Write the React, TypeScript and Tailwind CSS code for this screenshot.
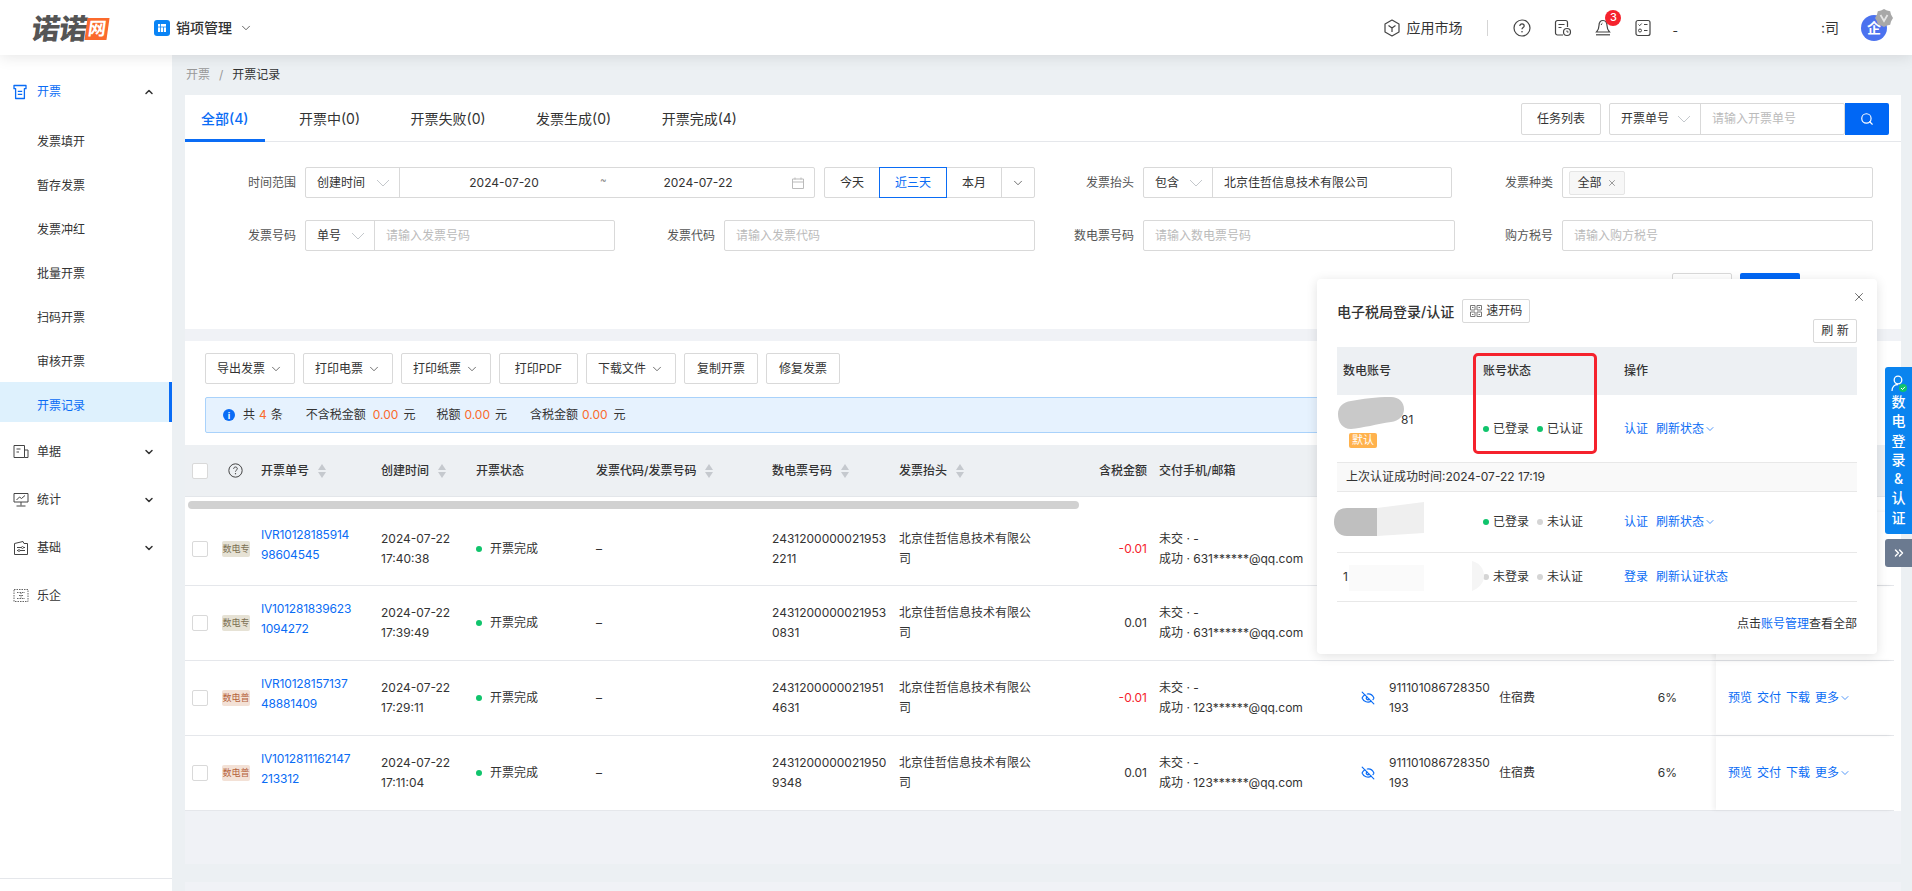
import { ChevronDown, ChevronUp, ChevronsRight, EyeOff, Search, X } from "lucide-react";
import type { ReactNode } from "react";

const SUB_MENU = ["发票填开", "暂存发票", "发票冲红", "批量开票", "扫码开票", "审核开票", "开票记录"];

const TABS = ["全部(4)", "开票中(0)", "开票失败(0)", "发票生成(0)", "开票完成(4)"];

const TOOLBAR = [
	{ label: "导出发票", w: "w-[90px]", menu: true },
	{ label: "打印电票", w: "w-[90px]", menu: true },
	{ label: "打印纸票", w: "w-[90px]", menu: true },
	{ label: "打印PDF", w: "w-[79px]", menu: false },
	{ label: "下载文件", w: "w-[90px]", menu: true },
	{ label: "复制开票", w: "w-[74px]", menu: false },
	{ label: "修复发票", w: "w-[74px]", menu: false },
];

type Invoice = {
	no: string;
	kind: string;
	created: string;
	number: string;
	amount: string;
	email: string;
	// 被弹窗挡住的行,右侧列不渲染
	covered?: boolean;
};

const INVOICES: Invoice[] = [
	{ no: "IVR10128185914\n98604545", kind: "数电专", created: "2024-07-22\n17:40:38", number: "2431200000021953\n2211", amount: "-0.01", email: "631******@qq.com", covered: true },
	{ no: "IV101281839623\n1094272", kind: "数电专", created: "2024-07-22\n17:39:49", number: "2431200000021953\n0831", amount: "0.01", email: "631******@qq.com", covered: true },
	{ no: "IVR10128157137\n48881409", kind: "数电普", created: "2024-07-22\n17:29:11", number: "2431200000021951\n4631", amount: "-0.01", email: "123******@qq.com" },
	{ no: "IV1012811162147\n213312", kind: "数电普", created: "2024-07-22\n17:11:04", number: "2431200000021950\n9348", amount: "0.01", email: "123******@qq.com" },
];

const TABLE_COLS =
	"grid grid-cols-[37px_39px_120px_95px_120px_176px_127px_151px_97px_12px_202px_28px_110px_110px_68px_39px_177px]";

const Caret = () => (
	<svg width="14" height="8" viewBox="0 0 14 8" fill="none" className="shrink-0" aria-hidden="true">
		<path d="M1 1l6 6 6-6" stroke="#c4c8cc" strokeWidth="1" />
	</svg>
);

const SortIcon = () => (
	<svg width="8" height="14" viewBox="0 0 8 14" className="ml-[9px] shrink-0" aria-hidden="true">
		<path d="M4 0l4 6H0z" fill="#c5c9ce" />
		<path d="M4 14L0 8h8z" fill="#c5c9ce" />
	</svg>
);

const QuestionIcon = ({ size }: { size: number }) => (
	<svg width={size} height={size} viewBox="0 0 18 18" fill="none" aria-hidden="true">
		<circle cx="9" cy="9" r="8" stroke="#444" strokeWidth="1.2" />
		<path d="M6.8 7c0-1.3 1-2.2 2.2-2.2s2.2.9 2.2 2.1c0 1.6-2.2 1.7-2.2 3.4" stroke="#444" strokeWidth="1.2" />
		<circle cx="9" cy="12.8" r=".8" fill="#444" />
	</svg>
);

const Cell = ({ className, children }: { className: string; children: ReactNode }) => (
	<div className={`flex h-[31px] items-center rounded-[2px] border border-[#d9d9d9] bg-white ${className}`}>
		{children}
	</div>
);

const Field = ({ label, span, children }: { label: string; span?: boolean; children: ReactNode }) => (
	<div className={`flex items-center ${span ? "col-span-2" : ""}`}>
		<div className="w-[80px] shrink-0 text-right text-[#555]">{label}</div>
		<div className="ml-[9px]">{children}</div>
	</div>
);

const SelectBox = ({ text, w }: { text: string; w: string }) => (
	<div className={`flex h-full shrink-0 items-center justify-between border-r border-[#d9d9d9] pl-[11px] pr-[9px] text-[#333] ${w}`}>
		<span>{text}</span>
		<Caret />
	</div>
);

const NavRow = ({ label, arrow, children }: { label: string; arrow?: boolean; children: ReactNode }) => (
	<div className="flex h-[48px] items-center pl-[13px] pr-[17px]">
		<svg width="16" height="16" viewBox="0 0 16 16" fill="none" className="shrink-0" aria-hidden="true">
			{children}
		</svg>
		<span className="ml-[8px] flex-1">{label}</span>
		{arrow && <ChevronDown size={12} strokeWidth={3} color="#333" />}
	</div>
);

const Sidebar = () => (
	<aside className="flex w-[172px] shrink-0 flex-col justify-between bg-white text-[#333]">
		<div>
			<div className="mt-[15px] flex h-[44px] items-center pl-[13px] pr-[17px] text-[#0a6cf5]">
				<svg width="14" height="16" viewBox="0 0 14 16" fill="none" aria-hidden="true">
					<path d="M1 1.5h12v3.2h-1.6V14.5H2.6V4.7H1z" stroke="#0a6cf5" strokeWidth="1.3" strokeLinejoin="round" />
					<path d="M4.8 7.3h4.4M4.8 10.3h4.4" stroke="#0a6cf5" strokeWidth="1.2" />
				</svg>
				<span className="ml-[10px] flex-1">开票</span>
				<ChevronUp size={12} strokeWidth={3} color="#333" />
			</div>
			<div className="mt-[1px]">
				{SUB_MENU.map((item) => {
					const active = item === "开票记录";
					return (
						<div
							key={item}
							className={`mt-[4px] flex h-[40px] items-center pl-[37px] pt-[7px] ${
								active ? "border-r-[3px] border-[#0a6cf5] bg-[#def1fd] text-[#0a6cf5]" : ""
							}`}
						>
							{item}
						</div>
					);
				})}
			</div>
			<div className="mt-[6px]">
				<NavRow label="单据" arrow>
					<path d="M1 1.5h10.5v12H1zM11.5 6H15v7.5h-3.5M3.5 5h4M3.5 8h2.5" stroke="#444" strokeWidth="1" />
				</NavRow>
				<NavRow label="统计" arrow>
					<path d="M1 1.5h14v8.5H1zM8 10v3.5M3.5 14h9M3.5 8l3-3 2 1.500L12 3.500" stroke="#444" strokeWidth="1" />
				</NavRow>
				<NavRow label="基础" arrow>
					<path d="M1.500 3.500L10 1.500l1 2h3.500v11h-13zM4 7.500h8M4 10.500h8" stroke="#444" strokeWidth="1" />
					<circle cx="9.500" cy="7.500" r="1" fill="#fff" stroke="#444" strokeWidth=".8" />
					<circle cx="6" cy="10.500" r="1" fill="#fff" stroke="#444" strokeWidth=".8" />
				</NavRow>
				<NavRow label="乐企">
					<path d="M1 1.500h14v12H1z" stroke="#666" strokeWidth="1" strokeDasharray="1.5 1" />
					<path d="M4 4.500h8M6 7.500h4M4 10.500h8M8 4.500v6" stroke="#666" strokeWidth="1" strokeDasharray="1.5 1" />
				</NavRow>
			</div>
		</div>
		<div className="h-[13px] border-t border-[#e5e7eb]" />
	</aside>
);

const Header = () => (
	<header className="relative z-10 flex h-[55px] shrink-0 items-center bg-white text-[14px] text-[#333] shadow-[0_2px_14px_rgba(0,0,0,0.1)]">
		<div className="ml-[32px] mt-[2px] flex w-[122px] items-center">
			<span className="skew-x-[-8deg] text-[28px] font-black leading-none tracking-[-0.5px] text-[#555]">诺诺</span>
			<span className="ml-[-1px] flex h-[22px] w-[22px] skew-x-[-8deg] items-center justify-center bg-[#fb6a2c] text-[18px] font-bold leading-none text-white">
				网
			</span>
		</div>
		<svg width="16" height="16" viewBox="0 0 16 16" aria-hidden="true">
			<rect width="16" height="16" rx="3" fill="#0a84f5" />
			<rect x="4" y="4" width="8" height="8" fill="#fff" />
			<path d="M6.500 4v8M4 7h8M9.500 7v5" stroke="#0a84f5" strokeWidth=".8" />
		</svg>
		<span className="ml-[6px] font-medium">销项管理</span>
		<ChevronDown size={14} strokeWidth={1.3} className="ml-[7px]" />
		<div className="flex-1" />
		<svg width="16" height="18" viewBox="0 0 16 18" fill="none" aria-hidden="true">
			<path d="M8 1l7 4v8l-7 4-7-4V5z" stroke="#444" strokeWidth="1.2" strokeLinejoin="round" />
			<path d="M4.500 6.500L8 9l3.500-2.500M8 9v4" stroke="#444" strokeWidth="1.2" />
		</svg>
		<span className="ml-[6px]">应用市场</span>
		<div className="ml-[25px] h-[16px] w-px bg-[#d5d5d5]" />
		<div className="ml-[25px]">
			<QuestionIcon size={18} />
		</div>
		<svg width="18" height="18" viewBox="0 0 18 18" fill="none" className="ml-[23px]" aria-hidden="true">
			<path d="M9 16H3.500A2 2 0 0 1 1.500 14V3.500a2 2 0 0 1 2-2h8a2 2 0 0 1 2 2V8" stroke="#444" strokeWidth="1.2" />
			<path d="M4.500 5.500h6M4.500 8.500h3" stroke="#444" strokeWidth="1.2" />
			<circle cx="13" cy="13" r="3.500" stroke="#444" strokeWidth="1.2" />
			<path d="M13 11.500V13h1.500" stroke="#444" strokeWidth="1" />
		</svg>
		<div className="relative ml-[23px]">
			<svg width="16" height="18" viewBox="0 0 16 18" fill="none" aria-hidden="true">
				<path d="M8 1.500c-2.800 0-4 2.400-4 5 0 3-1.200 5-2.500 6.500h13C13.200 11.500 12 9.500 12 6.500c0-2.600-1.200-5-4-5z" stroke="#444" strokeWidth="1.2" />
				<path d="M1 15.800h14" stroke="#444" strokeWidth="1.2" />
				<path d="M6.200 6c.2-1 .6-1.500 1.200-1.800" stroke="#444" strokeWidth="1" />
			</svg>
			<span className="absolute left-[10px] top-[-9px] flex h-[16px] w-[16px] items-center justify-center rounded-full bg-[#f5222d] text-[11px] font-medium text-white">
				3
			</span>
		</div>
		<svg width="16" height="18" viewBox="0 0 16 18" fill="none" className="ml-[24px]" aria-hidden="true">
			<rect x="1" y="1.500" width="14" height="15" rx="2" stroke="#444" strokeWidth="1.2" />
			<path d="M3.500 5.500l1.200 1.200 2-2.200M9 5.500h3.500M9 11.500h3.500" stroke="#444" strokeWidth="1" />
			<circle cx="5" cy="11.500" r="1.500" stroke="#444" strokeWidth="1" />
		</svg>
		<span className="ml-[21px] mt-[6px] text-[12px] leading-none">-</span>
		<span className="ml-[143px] w-[17px] whitespace-nowrap text-right">:司</span>
		<div className="relative ml-[23px] mr-[25px] flex h-[26px] w-[26px] items-center justify-center rounded-full bg-[#4b72ef] text-[14px] font-bold leading-none text-white">
			企
			<svg width="18" height="18" viewBox="0 0 18 18" className="absolute left-[14px] top-[-6px]" aria-hidden="true">
				<path d="M9 0l3 1.500 3.200.8.800 3.200L18 9l-2 3.500-.8 3.200-3.200.8L9 18l-3-1.500-3.200-.8L2 12.500 0 9l2-3.500.8-3.200L6 1.500z" fill="#a8a8a8" />
				<path d="M5.500 6L9 12l3.500-6" stroke="#e5e5e5" strokeWidth="1.800" fill="none" />
			</svg>
		</div>
	</header>
);

const FilterCard = () => (
	<section className="bg-white">
		<div className="flex h-[47px] justify-between border-b border-[#e5e7eb] pr-[12px]">
			<div className="flex gap-[18.5px] text-[14px]">
				{TABS.map((tab, i) => (
					<div
						key={tab}
						className={`flex h-[47px] items-center border-b-[3px] px-4 pt-[3px] ${
							i === 0 ? "border-[#0a6cf5] font-medium text-[#0a6cf5]" : "border-transparent text-[#333]"
						}`}
					>
						{tab}
					</div>
				))}
			</div>
			<div className="flex items-start pt-[8px]">
				<button className="h-[32px] w-[80px] rounded-[2px] border border-[#d9d9d9] text-[#333]">任务列表</button>
				<Cell className="ml-[8px] h-[32px] w-[236px]">
					<SelectBox text="开票单号" w="w-[91px]" />
					<span className="ml-[11px] text-[#bbb]">请输入开票单号</span>
				</Cell>
				<button className="flex h-[32px] w-[44px] items-center justify-center rounded-r-[2px] bg-[#0067f5]">
					<Search size={14} color="#fff" />
				</button>
			</div>
		</div>
		<div className="grid grid-cols-[repeat(4,419px)] gap-y-[22px] pl-[31px] pt-[25px]">
			<Field label="时间范围" span>
				<div className="flex items-center">
					<Cell className="w-[510px]">
						<SelectBox text="创建时间" w="w-[94px]" />
						<div className="flex flex-1 items-center text-[#333]">
							<span className="w-[208px] text-center">2024-07-20</span>
							<span className="-ml-[8px] -mt-[6px] w-[8px] text-[10px] text-[#888]">~</span>
							<span className="w-[180px] text-center">2024-07-22</span>
							<svg width="12" height="12" viewBox="0 0 12 12" fill="none" className="ml-auto mr-[10px]" aria-hidden="true">
								<path d="M.5 2h11v9.500H.5zM.5 5h11M3 .5v2M9 .5v2" stroke="#bbb" />
							</svg>
						</div>
					</Cell>
					<Cell className="ml-[9px] w-[211px]">
						<div className="w-[54px] text-center text-[#333]">今天</div>
						<div className="flex h-[31px] w-[68px] items-center justify-center border border-[#0a6cf5] text-[#0a6cf5]">近三天</div>
						<div className="w-[54px] text-center text-[#333]">本月</div>
						<div className="flex h-full flex-1 items-center justify-center border-l border-[#d9d9d9]">
							<ChevronDown size={14} strokeWidth={1.2} color="#333" />
						</div>
					</Cell>
				</div>
			</Field>
			<Field label="发票抬头">
				<Cell className="w-[309px]">
					<SelectBox text="包含" w="w-[69px]" />
					<span className="ml-[11px] text-[#333]">北京佳哲信息技术有限公司</span>
				</Cell>
			</Field>
			<Field label="发票种类">
				<Cell className="w-[311px]">
					<div className="ml-[6px] flex h-[24px] w-[56px] items-center justify-center gap-[5px] rounded-[2px] border border-[#e5e5e5] bg-[#f7f7f7] text-[#333]">
						全部
						<X size={10} color="#888" />
					</div>
				</Cell>
			</Field>
			<Field label="发票号码">
				<Cell className="w-[310px]">
					<SelectBox text="单号" w="w-[69px]" />
					<span className="ml-[11px] text-[#bbb]">请输入发票号码</span>
				</Cell>
			</Field>
			<Field label="发票代码">
				<Cell className="w-[311px] pl-[11px] text-[#bbb]">请输入发票代码</Cell>
			</Field>
			<Field label="数电票号码">
				<Cell className="w-[312px] pl-[11px] text-[#bbb]">请输入数电票号码</Cell>
			</Field>
			<Field label="购方税号">
				<Cell className="w-[311px] pl-[11px] text-[#bbb]">请输入购方税号</Cell>
			</Field>
		</div>
		<div className="mr-[101px] mt-[22px] flex justify-end gap-[8px] pb-[24px]">
			<button className="h-[32px] w-[60px] rounded-[2px] border border-[#d9d9d9] text-[#333]">重置</button>
			<button className="h-[32px] w-[60px] rounded-[2px] bg-[#0067f5] text-white">查询</button>
		</div>
	</section>
);

const Multi = ({ text, className = "" }: { text: string; className?: string }) => (
	<div className={`whitespace-pre-line leading-[20px] ${className}`}>{text}</div>
);

const TableRow = ({ row }: { row: Invoice }) => (
	<div className={`${TABLE_COLS} mr-[7px] h-[75px] items-center border-b border-[#e5e7eb] text-[#333] first:h-[74px]`}>
		<div className="flex justify-start pl-[7px]">
			<div className="h-[16px] w-[16px] rounded-[2px] border border-[#d9d9d9] bg-white" />
		</div>
		<div
			className={`flex h-[16px] w-[28px] items-center justify-center rounded-[2px] text-[9px] ${
				row.kind === "数电专" ? "bg-[#e6e2d5] text-[#7b6f52]" : "bg-[#f3e1d6] text-[#b5623c]"
			}`}
		>
			{row.kind}
		</div>
		<Multi text={row.no} className="-mt-[8px] tracking-[-0.2px] text-[#0a6cf5]" />
		<Multi text={row.created} />
		<div className="flex items-center">
			<span className="h-[6px] w-[6px] rounded-full bg-[#10c46c]" />
			<span className="ml-[8px]">开票完成</span>
		</div>
		<div>–</div>
		<Multi text={row.number} />
		<Multi text={"北京佳哲信息技术有限公\n司"} />
		<div className={`text-right ${row.amount.startsWith("-") ? "text-[#f5222d]" : ""}`}>{row.amount}</div>
		<div />
		<Multi text={`未交 · -\n成功 · ${row.email}`} />
		{row.covered ? (
			<div className="col-span-5" />
		) : (
			<>
				<EyeOff size={14} color="#0a6cf5" />
				<Multi text={"911101086728350\n193"} />
				<div>住宿费</div>
				<div className="text-right">6%</div>
				<div />
			</>
		)}
		<div className="flex h-full items-center gap-[5px] pl-[12px] text-[#0a6cf5] shadow-[-3px_0_4px_rgba(0,0,0,0.05)]">
			{!row.covered && (
				<>
					<span className="shrink-0">预览</span>
					<span className="shrink-0">交付</span>
					<span className="shrink-0">下载</span>
					<span className="flex shrink-0 items-center">
						更多
						<ChevronDown size={12} strokeWidth={1.4} />
					</span>
				</>
			)}
		</div>
	</div>
);

const RecordCard = () => (
	<section className="mt-[12px] bg-white pt-[12px]">
		<div className="flex gap-[8px] pl-[20px]">
			{TOOLBAR.map((b) => (
				<button
					key={b.label}
					className={`flex h-[31px] items-center justify-center gap-[4px] rounded-[2px] border border-[#d9d9d9] text-[#333] ${b.w}`}
				>
					{b.label}
					{b.menu && <ChevronDown size={14} strokeWidth={1.2} />}
				</button>
			))}
		</div>
		<div className="ml-[20px] mr-[30px] mt-[13px] flex h-[36px] items-center rounded-[2px] border border-[#a9d2fb] bg-[#e6f2fe] pl-[17px] text-[#333]">
			<span className="flex h-[12px] w-[12px] items-center justify-center rounded-full bg-[#0a6cf5] text-[9px] font-bold leading-none text-white">
				i
			</span>
			<span className="ml-[8px]">共</span>
			<span className="ml-[4px] text-[#fa6a2c]">4</span>
			<span className="ml-[4px]">条</span>
			<span className="ml-[23px]">不含税金额</span>
			<span className="ml-[7px] text-[#fa6a2c]">0.00</span>
			<span className="ml-[5px]">元</span>
			<span className="ml-[21px]">税额</span>
			<span className="ml-[4px] text-[#fa6a2c]">0.00</span>
			<span className="ml-[5px]">元</span>
			<span className="ml-[23px]">含税金额</span>
			<span className="ml-[4px] text-[#fa6a2c]">0.00</span>
			<span className="ml-[6px]">元</span>
		</div>
		<div className="mt-[12px]">
			<div className={`${TABLE_COLS} h-[52px] items-center border-b border-[#e3e6ea] bg-[#edf0f3] font-medium text-[#333]`}>
				<div className="pl-[7px]">
					<div className="h-[16px] w-[16px] rounded-[2px] border border-[#d9d9d9] bg-white" />
				</div>
				<div className="pl-[6px]">
					<QuestionIcon size={15} />
				</div>
				<div className="flex items-center">开票单号<SortIcon /></div>
				<div className="flex items-center">创建时间<SortIcon /></div>
				<div>开票状态</div>
				<div className="flex items-center">发票代码/发票号码<SortIcon /></div>
				<div className="flex items-center">数电票号码<SortIcon /></div>
				<div className="flex items-center">发票抬头<SortIcon /></div>
				<div className="text-right">含税金额</div>
				<div />
				<div>交付手机/邮箱</div>
			</div>
			<div className="flex h-[15px] items-start pl-[3px] pt-[4px]">
				<div className="h-[8px] w-[891px] rounded-[4px] bg-[#d1d1d1]" />
			</div>
			<div>
				{INVOICES.map((row) => (
					<TableRow key={row.no} row={row} />
				))}
			</div>
		</div>
	</section>
);

const Status = ({ on, label }: { on: boolean; label: string }) => (
	<span className="flex w-[54px] items-center">
		<span className={`h-[6px] w-[6px] rounded-full ${on ? "bg-[#10c46c]" : "bg-[#d5d5d5]"}`} />
		<span className="ml-[4px]">{label}</span>
	</span>
);

const ACCOUNT_COLS = "grid grid-cols-[146px_141px_1fr] items-center";

const AuthPopup = () => (
	<div className="absolute left-[1317px] top-[279px] h-[375px] w-[560px] rounded-[4px] bg-white px-[20px] pt-[20px] text-[#333] shadow-[0_2px_12px_rgba(0,0,0,0.12)]">
		<X size={14} strokeWidth={1.2} className="absolute right-[11px] top-[11px]" />
		<div className="flex h-[24px] items-center">
			<span className="text-[14px] font-medium">电子税局登录/认证</span>
			<button className="ml-[8px] flex h-[24px] w-[68px] items-center justify-center gap-[4px] rounded-[2px] border border-[#d9d9d9]">
				<svg width="12" height="12" viewBox="0 0 12 12" fill="none" aria-hidden="true">
					<path d="M.5.5h4.500v4.500H.5zM7 .5h4.500v4.500H7zM.5 7h4.500v4.500H.5zM7 7h4.500v4.500H7z" stroke="#777" />
					<path d="M2 2.500h1.500M8.500 2.500H10M2 9.500h1.500M8.500 9.500H10" stroke="#777" />
				</svg>
				速开码
			</button>
		</div>
		<div className="-mt-[4px] flex justify-end">
			<button className="h-[24px] w-[44px] rounded-[2px] border border-[#d9d9d9]">刷 新</button>
		</div>
		<div className={`${ACCOUNT_COLS} mt-[4px] h-[48px] bg-[#edf0f3] font-medium`}>
			<div className="pl-[6px]">数电账号</div>
			<div>账号状态</div>
			<div>操作</div>
		</div>
		<div className={`${ACCOUNT_COLS} h-[68px] border-b border-[#e8e8e8]`}>
			<div className="flex flex-col items-start">
				<div className="pl-[64px] leading-[20px]">81</div>
				<div className="ml-[12px] mt-[3px] flex h-[15px] w-[28px] items-center justify-center rounded-[2px] bg-[#ffb24d] text-[11px] text-white">
					默认
				</div>
			</div>
			<div className="flex">
				<Status on label="已登录" />
				<Status on label="已认证" />
			</div>
			<div className="flex items-center text-[#0a6cf5]">
				<span>认证</span>
				<span className="ml-[8px]">刷新状态</span>
				<ChevronDown size={12} strokeWidth={1.4} />
			</div>
		</div>
		<div className="flex h-[29px] items-center border-b border-[#e8e8e8] bg-[#f9f9f9] pl-[9px]">
			上次认证成功时间:2024-07-22 17:19
		</div>
		<div className={`${ACCOUNT_COLS} h-[61px] border-b border-[#e8e8e8]`}>
			<div />
			<div className="flex">
				<Status on label="已登录" />
				<Status on={false} label="未认证" />
			</div>
			<div className="flex items-center text-[#0a6cf5]">
				<span>认证</span>
				<span className="ml-[8px]">刷新状态</span>
				<ChevronDown size={12} strokeWidth={1.4} />
			</div>
		</div>
		<div className={`${ACCOUNT_COLS} h-[49px] border-b border-[#e8e8e8]`}>
			<div className="pl-[6px]">1</div>
			<div className="flex">
				<Status on={false} label="未登录" />
				<Status on={false} label="未认证" />
			</div>
			<div className="flex items-center text-[#0a6cf5]">
				<span>登录</span>
				<span className="ml-[8px]">刷新认证状态</span>
			</div>
		</div>
		<div className="mt-[12px] text-right leading-[20px]">
			点击<span className="text-[#0a6cf5]">账号管理</span>查看全部
		</div>

		{/* 打码痕迹 */}
		<svg width="175" height="220" viewBox="0 0 175 220" className="absolute left-[14px] top-[116px]" aria-hidden="true">
			<path d="M20 6c12-2 24-4 40-4 8 0 13 5 13 12s-5 12-13 13c-14 2-28 6-40 7C11 34 7 27 7 19 7 12 12 7 20 6z" fill="#c9c9c9" />
			<path d="M46 113h-30c-9 0-13 6-13 14s5 14 13 14h30z" fill="#bfbfbf" />
			<path d="M46 113l47-6v31l-47 3z" fill="#efefef" />
			<path d="M18 170h75v26H18z" fill="#fafafa" />
			<path d="M141 166c8 2 12 8 12 15s-5 12-12 15z" fill="#f5f5f5" />
		</svg>
		<div className="absolute left-[156px] top-[74px] h-[101px] w-[124px] rounded-[5px] border-[3px] border-[#f5222d]" />
	</div>
);

const AuthFloat = () => (
	<>
		<div className="absolute left-[1885px] top-[367px] flex h-[167px] w-[27px] flex-col items-center rounded-l-[3px] bg-[#0a84ef] pt-[8px] text-[14px] font-medium leading-[19.3px] text-white">
			<svg width="16" height="18" viewBox="0 0 16 18" fill="none" className="mb-[-1px]" aria-hidden="true">
				<circle cx="7" cy="5" r="3.800" stroke="#fff" strokeWidth="1.300" />
				<path d="M1 16c0-4 2.500-6.500 6-6.500" stroke="#fff" strokeWidth="1.300" />
				<circle cx="12" cy="13" r="4" fill="#10c46c" />
				<path d="M10 13l1.500 1.500L14 11.800" stroke="#fff" />
			</svg>
			{["数", "电", "登", "录", "&", "认", "证"].map((c) => (
				<span key={c}>{c}</span>
			))}
		</div>
		<div className="absolute left-[1885px] top-[539px] flex h-[28px] w-[27px] items-center justify-center rounded-l-[3px] bg-[#6b7a90]">
			<ChevronsRight size={14} color="#fff" strokeWidth={2.5} />
		</div>
	</>
);

export default function App() {
	return (
		<div className="relative flex h-[891px] w-[1912px] flex-col overflow-hidden bg-[#ecf0f3] text-[12px] [font-family:Inter,'Noto_Sans_CJK_SC',sans-serif]">
			<Header />
			<div className="flex min-h-0 flex-1">
				<Sidebar />
				<main className="flex min-w-0 flex-1 flex-col pl-[13px] pr-[11px]">
					<div className="flex h-[40px] shrink-0 items-center pl-px text-[#999]">
						开票<span className="mx-[9px]">/</span><span className="text-[#333]">开票记录</span>
					</div>
					<div className="h-[769px] shrink-0 bg-[#f0f2f6]">
						<FilterCard />
						<RecordCard />
					</div>
					<div className="mt-[18px] flex-1 bg-[#f0f2f6]" />
				</main>
			</div>
			<AuthPopup />
			<AuthFloat />
		</div>
	);
}
